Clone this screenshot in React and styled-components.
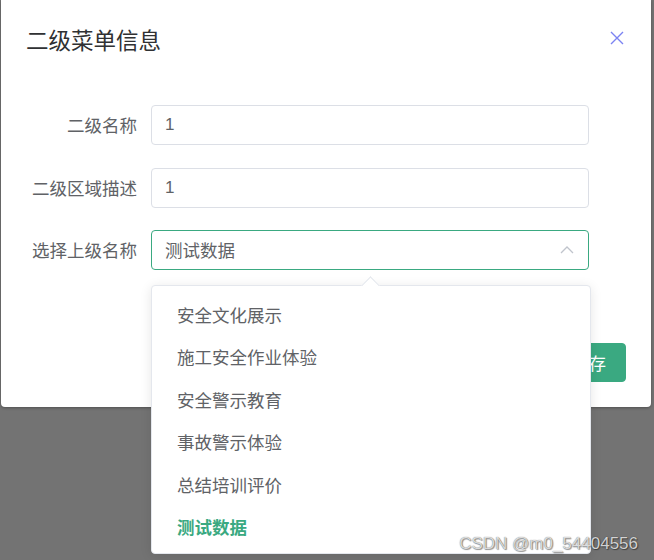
import React from 'react'
import styled, { createGlobalStyle } from 'styled-components'

const GlobalStyle = createGlobalStyle`
  html, body {
    margin: 0;
    padding: 0;
    background: #737373;
  }
  body {
    font-family: 'Noto Sans CJK SC', 'Microsoft YaHei', sans-serif;
  }
`

const options = ['安全文化展示', '施工安全作业体验', '安全警示教育', '事故警示体验', '总结培训评价', '测试数据']

const Page = styled.div`
  position: relative;
  width: 654px;
  height: 560px;
  overflow: hidden;
  background: #737373;
`

const Dialog = styled.div`
  position: relative;
  width: 650px;
  height: 407px;
  margin-left: 1px;
  background: #fff;
  border-radius: 0 0 4px 4px;
  box-shadow: 0 1px 3px rgba(0, 0, 0, 0.3);
  box-sizing: border-box;
`

const Header = styled.div`
  display: flex;
  align-items: center;
  justify-content: space-between;
  padding: 23px 25px 0 25px;
  height: 32px;
`

const Title = styled.span`
  font-size: 22.5px;
  line-height: 32px;
  color: #303133;
`

const Close = styled.button`
  display: flex;
  align-items: center;
  justify-content: center;
  width: 16px;
  height: 16px;
  padding: 0;
  margin-right: 1px;
  margin-top: -2px;
  border: 0;
  background: none;
  color: #7b83f2;
`

const Form = styled.div`
  padding: 50px 0 0;
`

const Row = styled.div`
  display: flex;
  align-items: center;
  margin-bottom: 22.5px;
  height: 40px;
`

const Label = styled.label`
  width: 136px;
  padding-right: 14px;
  box-sizing: content-box;
  text-align: right;
  font-size: 17.5px;
  line-height: 40px;
  color: #606266;
  white-space: nowrap;
`

const Field = styled.div`
  position: relative;
  width: 438px;
  height: 40px;
  box-sizing: border-box;
  border: 1px solid ${({ active }) => (active ? '#3aa981' : '#dcdfe6')};
  border-radius: 4px;
  display: flex;
  align-items: center;
  justify-content: space-between;
  padding: 0 14px 0 13px;
  font-size: 17.5px;
  color: #606266;
`

const Value = styled.span`
  font-family: ${({ num }) => (num ? "'Liberation Sans', Arial, sans-serif" : 'inherit')};
  font-size: ${({ num }) => (num ? '17px' : '17.5px')};
  line-height: 38px;
`

const Footer = styled.div`
  position: absolute;
  right: 25px;
  bottom: 25px;
  display: flex;
  gap: 12px;
`

const Button = styled.button`
  width: 75px;
  height: 39px;
  border-radius: 4px;
  border: 1px solid ${({ primary }) => (primary ? '#3aa981' : '#dcdfe6')};
  background: ${({ primary }) => (primary ? '#3aa981' : '#fff')};
  color: ${({ primary }) => (primary ? '#fff' : '#606266')};
  font-family: inherit;
  font-size: 17.5px;
  padding: 0;
`

const Dropdown = styled.div`
  position: absolute;
  left: -1px;
  top: calc(100% + 16px);
  width: 440px;
  box-sizing: border-box;
  background: #fff;
  border: 1px solid #e4e7ed;
  border-radius: 4px;
  box-shadow: 0 2px 12px rgba(0, 0, 0, 0.1);
  padding: 8px 0 5px;
  z-index: 10;

  &::before {
    content: '';
    position: absolute;
    top: -7px;
    left: 212px;
    width: 12px;
    height: 12px;
    background: #fff;
    border-left: 1px solid #e4e7ed;
    border-top: 1px solid #e4e7ed;
    transform: rotate(45deg);
  }
`

const Item = styled.div`
  position: relative;
  height: 42.4px;
  line-height: 42.4px;
  padding: 0 25px;
  font-size: 17.5px;
  color: ${({ selected }) => (selected ? '#3aa981' : '#606266')};
  font-weight: ${({ selected }) => (selected ? 700 : 400)};
`

const Watermark = styled.div`
  position: absolute;
  right: 16px;
  bottom: 6px;
  font-family: 'Liberation Sans', Arial, sans-serif;
  font-size: 17px;
  color: rgba(240, 240, 240, 0.85);
  text-shadow: 0 0 1px rgba(0, 0, 0, 0.6), 1px 1px 1px rgba(0, 0, 0, 0.4);
  z-index: 20;
`

const CloseIcon = () => (
  <svg width='14' height='14' viewBox='0 0 14 14'>
    <path d='M1 1 L13 13 M13 1 L1 13' stroke='currentColor' strokeWidth='1.4' fill='none' />
  </svg>
)

const ArrowUp = () => (
  <svg width='14' height='8' viewBox='0 0 14 8'>
    <path d='M1 7 L7 1 L13 7' stroke='#c0c4cc' strokeWidth='1.3' fill='none' />
  </svg>
)

export default function App() {
  return (
    <Page>
      <GlobalStyle />
      <Dialog>
        <Header>
          <Title>二级菜单信息</Title>
          <Close>
            <CloseIcon />
          </Close>
        </Header>
        <Form>
          <Row>
            <Label>二级名称</Label>
            <Field>
              <Value num>1</Value>
            </Field>
          </Row>
          <Row>
            <Label>二级区域描述</Label>
            <Field>
              <Value num>1</Value>
            </Field>
          </Row>
          <Row>
            <Label>选择上级名称</Label>
            <Field active>
              <Value>测试数据</Value>
              <ArrowUp />
              <Dropdown>
                {options.map((o) => (
                  <Item key={o} selected={o === '测试数据'}>
                    {o}
                  </Item>
                ))}
              </Dropdown>
            </Field>
          </Row>
        </Form>
        <Footer>
          <Button>取消</Button>
          <Button primary>保存</Button>
        </Footer>
      </Dialog>
      <Watermark>CSDN @m0_54404556</Watermark>
    </Page>
  )
}
